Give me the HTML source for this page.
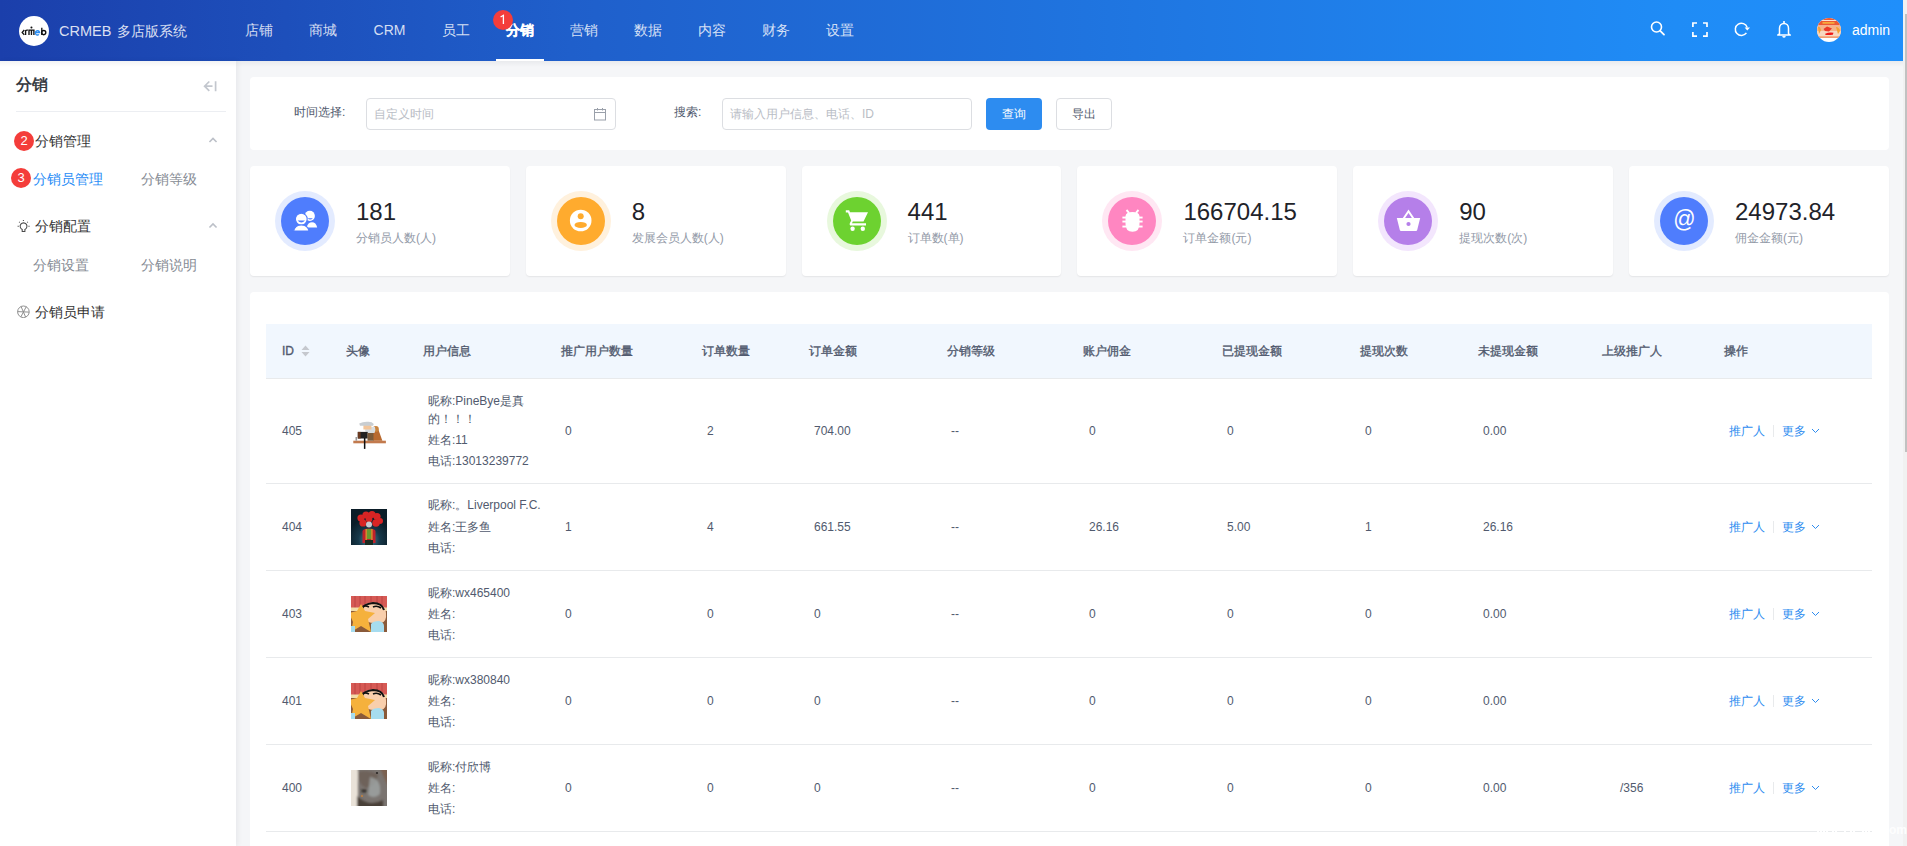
<!DOCTYPE html>
<html><head><meta charset="utf-8">
<style>
*{box-sizing:border-box;margin:0;padding:0}
html,body{width:1907px;height:846px;overflow:hidden}
body{font-family:"Liberation Sans",sans-serif;background:#f5f6f8;position:relative;color:#515a6e}
.abs{position:absolute}
#hdr{left:0;top:0;width:1903px;height:61px;background:linear-gradient(90deg,#1b3fab 0%,#1f5fcb 30%,#1f8cf6 88%,#1f8ffb 100%)}
#logo{left:19px;top:16px;width:30px;height:30px;border-radius:50%;background:#fff}
#logo span{position:absolute;left:3px;top:8px;font-size:9px;font-weight:bold;color:#111;letter-spacing:-0.5px}
#title{left:59px;top:21px;font-size:14.5px;line-height:20px;color:rgba(255,255,255,.85);white-space:nowrap}
.nav{top:0;height:61px;line-height:61px;font-size:14px;color:rgba(255,255,255,.82);white-space:nowrap;text-align:center}
.nav.act{color:#fff;font-weight:bold;-webkit-text-stroke:0.3px #fff}
#uline{left:496px;top:59px;width:48px;height:2px;background:#fff}
.badge{width:20px;height:20px;border-radius:50%;background:#f43d3a;color:#fff;font-size:13px;line-height:20px;text-align:center}
#side{left:0;top:61px;width:236px;height:785px;background:#fff;box-shadow:2px 0 5px rgba(0,21,41,.06)}
#hsh{left:0;top:61px;width:1903px;height:6px;background:linear-gradient(180deg,rgba(0,21,41,.05),rgba(0,21,41,0))}
#sb{left:1903px;top:0;width:4px;height:846px;background:#f1f1f1}
#sbt{left:1905px;top:14px;width:2px;height:438px;background:#c1c1c1}
.card{background:#fff;border-radius:4px}
.t12{font-size:12px;line-height:16px;white-space:nowrap}
.inp{border:1px solid #dcdee2;border-radius:4px;background:#fff}
.ph{color:#b9bdc5}
.stat{top:166px;width:260px;height:110px;box-shadow:0 1px 1.5px rgba(0,0,0,.07)}
.halo{left:25px;top:25px;width:60px;height:60px;border-radius:50%}
.core{left:6px;top:6px;width:48px;height:48px;border-radius:50%}
.num{left:106px;top:32px;font-size:24px;line-height:28px;color:#1f2329;white-space:nowrap}
.lbl{left:106px;top:64px;font-size:12px;line-height:16px;color:#939aa8;white-space:nowrap}
.th{top:324px;height:54px;line-height:54px;font-size:12px;font-weight:normal;-webkit-text-stroke:0.35px #515a6e;color:#515a6e;white-space:nowrap}
.td{font-size:12px;color:#515a6e;white-space:nowrap}
.rl{left:266px;width:1606px;height:1px;background:#e8eaec}
.link{color:#2d8cf0}
.av1{background:radial-gradient(circle at 50% 55%,#7a5a3a 0,#a87b4f 20%,#fff 55%)}
.av2{background:radial-gradient(circle at 50% 30%,#c8202a 0,#a01822 25%,#15303c 55%,#0c1c26 100%)}
.av3{background:linear-gradient(180deg,#c23a3a 0,#c23a3a 25%,#f0c8a0 25%,#f3b63c 70%,#7cc0e8 100%)}
.av4{background:radial-gradient(circle at 50% 50%,#6a6560 0,#8a8580 40%,#c0bcb5 100%)}
</style></head><body>
<div id="hdr" class="abs"></div>
<div id="logo" class="abs"><svg width="30" height="30" viewBox="0 0 30 30" style="position:absolute;left:0;top:0"><g fill="none" stroke="#111" stroke-width="1.35"><path d="M5.3 14 L3.2 16.4 L5.3 18.9"/><path d="M6.6 19 V14.6 Q7.2 13.9 8.9 14.1"/><path d="M10 19 V14.1 H14.9 V19 M12.45 14.1 V19"/><path d="M22.8 11.8 V19"/><circle cx="24.7" cy="16.6" r="2.1"/></g><circle cx="12.45" cy="11.6" r="1" fill="#111"/><g fill="none" stroke="#2a8cf0" stroke-width="1.35"><path d="M16.4 16.5 H20.5 A2.1 2.2 0 1 0 19.9 18.4"/></g></svg></div>
<div id="title" class="abs">CRMEB<span style="font-size:14px;margin-left:6px">多店版系统</span></div>
<div class="abs nav" style="left:235px;width:48px">店铺</div>
<div class="abs nav" style="left:299px;width:48px">商城</div>
<div class="abs nav" style="left:363px;width:53px">CRM</div>
<div class="abs nav" style="left:432px;width:48px">员工</div>
<div class="abs nav act" style="left:496px;width:48px">分销</div>
<div class="abs nav" style="left:560px;width:48px">营销</div>
<div class="abs nav" style="left:624px;width:48px">数据</div>
<div class="abs nav" style="left:688px;width:48px">内容</div>
<div class="abs nav" style="left:752px;width:48px">财务</div>
<div class="abs nav" style="left:816px;width:48px">设置</div>
<div id="uline" class="abs"></div>
<div class="abs badge" style="left:493px;top:10px"><svg width="20" height="20" viewBox="0 0 20 20" style="position:absolute;left:0;top:0"><path d="M7.6 7 L10.4 5.3 V14" fill="none" stroke="#fff" stroke-width="1.3"/></svg></div>


<svg class="abs" style="left:1649px;top:20px" width="17" height="17" viewBox="0 0 17 17"><g fill="none" stroke="#fff" stroke-width="1.6"><circle cx="7.5" cy="7" r="5"/><path d="M11.2 10.8 L15 14.6" stroke-linecap="round" stroke-width="1.8"/></g></svg>
<svg class="abs" style="left:1691px;top:21px" width="18" height="17" viewBox="0 0 18 17"><g fill="none" stroke="#fff" stroke-width="1.7"><path d="M1.9 6 V2 H6 M12 2 H16 V6 M16 11 V15.2 H12 M6 15.2 H1.9 V11"/></g></svg>
<svg class="abs" style="left:1733px;top:21px" width="18" height="17" viewBox="0 0 18 17"><g fill="none" stroke="#fff" stroke-width="1.5"><path d="M13.4 11.9 A6.1 6.1 0 1 1 14.2 6.4"/></g><path d="M11.6 6.6 L17 6.6 L14.3 9.6Z" fill="#fff"/></svg>
<svg class="abs" style="left:1776px;top:20px" width="16" height="18" viewBox="0 0 16 18"><g fill="none" stroke="#fff" stroke-width="1.5"><path d="M3.5 13.8 V8.2 A4.5 4.8 0 0 1 12.5 8.2 V13.8 L14.3 15 H1.7Z" stroke-linejoin="round"/><path d="M6.6 16.2 Q8 17.6 9.4 16.2"/></g><circle cx="8" cy="2" r="1.1" fill="#fff"/></svg>
<div class="abs" style="left:1817px;top:18px;width:24px;height:24px;border-radius:50%;overflow:hidden;background:#fff"><svg width="24" height="24" viewBox="0 0 24 24"><rect width="24" height="7.5" fill="#ec5a34"/><rect x="4" y="2" width="15" height="1" fill="#fde0d0"/><rect x="5.5" y="4.2" width="12" height="1.4" fill="#f8c040"/><rect y="7.5" width="24" height="11.5" fill="#f6b48a"/><rect y="13" width="24" height="6" fill="#f7d8c0"/><path d="M1 9 Q3 8 4 12 L2 16Z" fill="#f5a030"/><path d="M19 9 Q22 9 23 13 L21 16Z" fill="#f5a030"/><path d="M6.5 11 L10 8.5 L15 10.5 L12 13.5 L8 13Z" fill="#ea3a2a"/><path d="M8.2 15.8 Q12 14 16.5 14.8 L15.8 16.8 Q12 17.2 8.5 17Z" fill="#f01818"/><rect y="18.5" width="24" height="1.3" fill="#f08850"/></svg></div>
<div class="abs" style="left:1852px;top:20px;font-size:14px;line-height:20px;color:#fff;white-space:nowrap">admin</div>
<div id="side" class="abs"></div>

<div class="abs" style="left:16px;top:73px;font-size:16px;line-height:24px;font-weight:normal;-webkit-text-stroke:0.45px #2b2f36;color:#2b2f36">分销</div>
<svg class="abs" style="left:203px;top:80px" width="16" height="13" viewBox="0 0 16 13"><path d="M6.3 1.5 L1.6 6.2 L6.3 10.9 M1.6 6.2 H9.5 M12.6 1.3 V11.3" fill="none" stroke="#c3c7ce" stroke-width="1.7"/></svg>
<div class="abs" style="left:16px;top:111px;width:210px;height:1px;background:#eceef2"></div>
<div class="abs badge" style="left:14px;top:131px">2</div>
<div class="abs" style="left:35px;top:131px;font-size:14px;line-height:20px;color:#333">分销管理</div>
<svg class="abs" style="left:208px;top:137px" width="11" height="7" viewBox="0 0 11 7"><path d="M1.45 5.05 L5 1.4 L8.55 5.05" fill="none" stroke="#bcc0c8" stroke-width="1.6"/></svg>
<div class="abs badge" style="left:11px;top:168px">3</div>
<div class="abs" style="left:33px;top:169px;font-size:14px;line-height:20px;color:#1f8cf6">分销员管理</div>
<div class="abs" style="left:141px;top:169px;font-size:14px;line-height:20px;color:#868b94">分销等级</div>
<svg class="abs" style="left:17px;top:219px" width="14" height="14" viewBox="0 0 14 14"><g fill="none" stroke="#4a4a4a" stroke-width="1.05"><path d="M5.2 12.5 V10.4 A3.4 3.4 0 1 1 7.9 10.4 V12.5 Z"/><path d="M6.4 0.9 V2.1 M2.1 2.8 L2.8 3.5 M10.9 2.8 L10.2 3.5 M0.6 7.3 H1.8 M11.4 7.3 H12.6"/></g></svg>
<div class="abs" style="left:35px;top:216px;font-size:14px;line-height:20px;color:#333">分销配置</div>
<svg class="abs" style="left:208px;top:222px" width="11" height="7" viewBox="0 0 11 7"><path d="M1.45 5.55 L5 1.9 L8.55 5.55" fill="none" stroke="#bcc0c8" stroke-width="1.6"/></svg>
<div class="abs" style="left:33px;top:255px;font-size:14px;line-height:20px;color:#868b94">分销设置</div>
<div class="abs" style="left:141px;top:255px;font-size:14px;line-height:20px;color:#868b94">分销说明</div>
<svg class="abs" style="left:17px;top:305px" width="13" height="13" viewBox="0 0 13 13"><g fill="none" stroke="#8a8a8a" stroke-width="0.95"><circle cx="6.4" cy="6.8" r="5.8"/><path d="M0.6 6.6 L12.2 7.1 M4.1 1.6 L8.6 12 M9.3 1.6 L3.8 12"/></g></svg>
<div class="abs" style="left:35px;top:302px;font-size:14px;line-height:20px;color:#333">分销员申请</div>

<div class="abs card" style="left:250px;top:77px;width:1639px;height:73px"></div>
<div class="abs t12" style="left:294px;top:104px;color:#515a6e">时间选择:</div>
<div class="abs inp" style="left:366px;top:98px;width:250px;height:32px"></div>
<div class="abs t12 ph" style="left:374px;top:106px">自定义时间</div>
<svg class="abs" style="left:594px;top:108px" width="13" height="13" viewBox="0 0 13 13"><g fill="none" stroke="#9aa0aa" stroke-width="1"><rect x="0.5" y="1.5" width="11" height="10.5"/><path d="M0.5 4.5H11.5 M3.5 0V2.5 M8.5 0V2.5"/></g></svg>
<div class="abs t12" style="left:674px;top:104px;color:#515a6e">搜索:</div>
<div class="abs inp" style="left:722px;top:98px;width:250px;height:32px"></div>
<div class="abs t12 ph" style="left:730px;top:106px">请输入用户信息、电话、ID</div>
<div class="abs" style="left:986px;top:98px;width:56px;height:32px;border-radius:4px;background:#2d8cf0;color:#fff;font-size:12px;line-height:32px;text-align:center">查询</div>
<div class="abs inp" style="left:1056px;top:98px;width:56px;height:32px;color:#515a6e;font-size:12px;line-height:30px;text-align:center">导出</div>
<div class="abs card stat" style="left:250.0px;width:259.8px"><div class="abs halo" style="background:#e3ebff"><div class="abs core" style="background:#4f7dfd"><svg width="48" height="48" viewBox="0 0 48 48"><g fill="#fff"><circle cx="28.8" cy="18.9" r="5.1"/><path d="M25.5 30.4 Q27 25.2 31 25.2 Q35 25.2 36.2 30.4Z"/></g><g fill="#fff" stroke="#4f7dfd" stroke-width="1.1"><circle cx="20.3" cy="22.1" r="5.9"/><path d="M12.6 34 Q13.8 28 20.3 28 Q26.8 28 28 34Z"/></g><g fill="#4f7dfd"><path d="M16.6 23.6 Q20.3 27.4 24 23.6Z"/><path d="M26.6 21.2 Q29.2 23.6 31.9 21.2Z"/></g></svg></div></div><div class="abs num">181</div><div class="abs lbl">分销员人数(人)</div></div>
<div class="abs card stat" style="left:525.8px;width:259.8px"><div class="abs halo" style="background:#fff1dd"><div class="abs core" style="background:#ffab2e"><svg width="48" height="48" viewBox="0 0 48 48"><circle cx="23.7" cy="23.5" r="10.8" fill="#fff"/><circle cx="23.7" cy="19.2" r="3" fill="#ffab2e"/><ellipse cx="23.7" cy="27.9" rx="6.2" ry="3" fill="#ffab2e"/></svg></div></div><div class="abs num">8</div><div class="abs lbl">发展会员人数(人)</div></div>
<div class="abs card stat" style="left:801.6px;width:259.8px"><div class="abs halo" style="background:#e8f8dd"><div class="abs core" style="background:#6dd230"><svg width="48" height="48" viewBox="0 0 48 48"><g fill="#fff"><path d="M12.8 13.3 H16.2 L17 15.2 H35 L30.5 24.6 H19.8 L19 26.2 H33 V28.6 H18.2 Q16.2 28.6 16.8 26.2 L18.2 23.5 L15 15.5 H12.8Z"/><circle cx="19.6" cy="31.8" r="2.2"/><circle cx="29.8" cy="31.8" r="2.2"/></g></svg></div></div><div class="abs num">441</div><div class="abs lbl">订单数(单)</div></div>
<div class="abs card stat" style="left:1077.4px;width:259.8px"><div class="abs halo" style="background:#ffe7f3"><div class="abs core" style="background:#ff86c1"><svg width="48" height="48" viewBox="0 0 48 48"><g fill="#fff"><path d="M17.5 19 Q18 15 24.5 15 Q31 15 31.5 19 V27 Q31.5 34.8 24.5 34.8 Q17.5 34.8 17.5 27Z"/><rect x="14.4" y="19.6" width="3.6" height="1.9"/><rect x="14.4" y="23.6" width="3.6" height="1.9"/><rect x="14.4" y="28.6" width="3.6" height="1.9"/><rect x="31" y="19.6" width="3.6" height="1.9"/><rect x="31" y="23.6" width="3.6" height="1.9"/><rect x="31" y="28.6" width="3.6" height="1.9"/></g><path d="M18.5 13 L21 15.8 M30.5 13 L28 15.8" stroke="#fff" stroke-width="1.9"/></svg></div></div><div class="abs num">166704.15</div><div class="abs lbl">订单金额(元)</div></div>
<div class="abs card stat" style="left:1353.2px;width:259.8px"><div class="abs halo" style="background:#f3e6fd"><div class="abs core" style="background:#b57fe9"><svg width="48" height="48" viewBox="0 0 48 48"><path d="M19.6 21.5 L24.5 14.2 L29.4 21.5" fill="none" stroke="#fff" stroke-width="2"/><path d="M12.8 21 H36.2 L33.2 33 Q32.9 33.9 32 33.9 H17 Q16.1 33.9 15.8 33 Z" fill="#fff"/><circle cx="24.5" cy="27" r="2.1" fill="#b57fe9"/></svg></div></div><div class="abs num">90</div><div class="abs lbl">提现次数(次)</div></div>
<div class="abs card stat" style="left:1629.0px;width:259.8px"><div class="abs halo" style="background:#e3ebff"><div class="abs core" style="background:#4f7dfd"><svg width="48" height="48" viewBox="0 0 48 48"><text x="24.5" y="31.5" text-anchor="middle" font-family="Liberation Sans" font-size="22" fill="#fff" transform="matrix(1,0,0,1.1,0,-4.5)">@</text></svg></div></div><div class="abs num">24973.84</div><div class="abs lbl">佣金金额(元)</div></div>
<div class="abs card" style="left:250px;top:292px;width:1639px;height:560px"></div>
<div class="abs" style="left:266px;top:324px;width:1606px;height:54px;background:#f1f7fe"></div>
<div class="abs rl" style="top:378px"></div>
<div class="abs th" style="left:282px">ID</div>
<div class="abs th" style="left:346px">头像</div>
<div class="abs th" style="left:423px">用户信息</div>
<div class="abs th" style="left:561px">推广用户数量</div>
<div class="abs th" style="left:702px">订单数量</div>
<div class="abs th" style="left:809px">订单金额</div>
<div class="abs th" style="left:947px">分销等级</div>
<div class="abs th" style="left:1083px">账户佣金</div>
<div class="abs th" style="left:1222px">已提现金额</div>
<div class="abs th" style="left:1360px">提现次数</div>
<div class="abs th" style="left:1478px">未提现金额</div>
<div class="abs th" style="left:1602px">上级推广人</div>
<div class="abs th" style="left:1724px">操作</div>
<svg class="abs" style="left:301px;top:345px" width="9" height="12" viewBox="0 0 9 12"><path d="M4.5 0.5 L8.5 5 H0.5Z M4.5 11.5 L8.5 7 H0.5Z" fill="#c5c8ce"/></svg>
<div class="abs td" style="left:282px;top:421px;line-height:20px">405</div>
<div class="abs" style="left:351px;top:413px;width:36px;height:36px"><svg width="36" height="36" viewBox="0 0 36 36"><rect x="2.3" y="27.7" width="32.6" height="2.6" fill="#c27a4e"/><path d="M20.5 14.7 Q24 13.5 27 15.5 L31.4 27.7 H22 Z" fill="#b86a30"/><circle cx="24.8" cy="16" r="3" fill="#c9843e"/><path d="M14 17 Q15 14 18 14 H24 Q25 17 23.5 20 H15Z" fill="#d8dde0"/><rect x="12.4" y="11.3" width="8" height="5.2" fill="#f2c59a"/><path d="M8.2 10.5 Q12 8.4 17 8.7 Q21 8.5 22.8 11 L22 12.8 H9Z" fill="#c9ced2"/><rect x="6.8" y="18.9" width="9.9" height="6.6" fill="#222"/><rect x="6.8" y="18.9" width="2.8" height="6.6" fill="#6a3a20"/><rect x="16.5" y="20" width="6" height="7.7" fill="#7a5a3a"/><rect x="12.9" y="25" width="1.5" height="10.9" fill="#111"/><rect x="4.5" y="24" width="1.6" height="3.7" fill="#999"/></svg></div>
<div class="abs td" style="left:428px;top:390.5px;line-height:20px">昵称:PineBye是真</div>
<div class="abs td" style="left:428px;top:409.3px;line-height:20px">的！！！</div>
<div class="abs td" style="left:428px;top:430.0px;line-height:20px">姓名:11</div>
<div class="abs td" style="left:428px;top:450.5px;line-height:20px">电话:13013239772</div>
<div class="abs td" style="left:565px;top:421px;line-height:20px">0</div>
<div class="abs td" style="left:707px;top:421px;line-height:20px">2</div>
<div class="abs td" style="left:814px;top:421px;line-height:20px">704.00</div>
<div class="abs td" style="left:951px;top:421px;line-height:20px">--</div>
<div class="abs td" style="left:1089px;top:421px;line-height:20px">0</div>
<div class="abs td" style="left:1227px;top:421px;line-height:20px">0</div>
<div class="abs td" style="left:1365px;top:421px;line-height:20px">0</div>
<div class="abs td" style="left:1483px;top:421px;line-height:20px">0.00</div>
<div class="abs td link" style="left:1729px;top:421px;line-height:20px">推广人</div>
<div class="abs" style="left:1773px;top:425px;width:1px;height:12px;background:#e8eaec"></div>
<div class="abs td link" style="left:1782px;top:421px;line-height:20px">更多</div>
<svg class="abs" style="left:1811px;top:428px" width="9" height="6" viewBox="0 0 9 6"><path d="M1 1 L4.5 4.5 L8 1" fill="none" stroke="#2d8cf0" stroke-width="1"/></svg>
<div class="abs rl" style="top:483px"></div>
<div class="abs td" style="left:282px;top:517px;line-height:20px">404</div>
<div class="abs" style="left:351px;top:509px;width:36px;height:36px"><svg width="36" height="36" viewBox="0 0 36 36"><defs><radialGradient id="g2" cx="50%" cy="85%" r="60%"><stop offset="0" stop-color="#4a8a9a"/><stop offset="0.5" stop-color="#16384a"/><stop offset="1" stop-color="#0b1d28"/></radialGradient></defs><rect width="36" height="36" fill="url(#g2)"/><g fill="#d82424"><circle cx="10" cy="9" r="3.6"/><circle cx="15" cy="6" r="3.6"/><circle cx="21" cy="5.5" r="3.6"/><circle cx="26" cy="7.5" r="3.6"/><circle cx="12" cy="14" r="3.6"/><circle cx="18" cy="10" r="3.4"/><circle cx="25" cy="14" r="3.8"/><circle cx="29" cy="12" r="3"/></g><circle cx="18" cy="15.5" r="3" fill="#c8c8d0"/><path d="M11.5 34 V22 Q12 19.5 18 19.5 Q24 19.5 24.5 22 V34Z" fill="#c0202a"/><rect x="15.5" y="20" width="5" height="10" fill="#6a9a30"/><rect x="14.5" y="20" width="1.4" height="12" fill="#d89030"/><rect x="20.2" y="20" width="1.4" height="12" fill="#d89030"/><rect x="14" y="31" width="8" height="5" fill="#1a2a20"/></svg></div>
<div class="abs td" style="left:428px;top:495.3px;line-height:20px">昵称:。Liverpool F.C.</div>
<div class="abs td" style="left:428px;top:516.6px;line-height:20px">姓名:王多鱼</div>
<div class="abs td" style="left:428px;top:537.5px;line-height:20px">电话:</div>
<div class="abs td" style="left:565px;top:517px;line-height:20px">1</div>
<div class="abs td" style="left:707px;top:517px;line-height:20px">4</div>
<div class="abs td" style="left:814px;top:517px;line-height:20px">661.55</div>
<div class="abs td" style="left:951px;top:517px;line-height:20px">--</div>
<div class="abs td" style="left:1089px;top:517px;line-height:20px">26.16</div>
<div class="abs td" style="left:1227px;top:517px;line-height:20px">5.00</div>
<div class="abs td" style="left:1365px;top:517px;line-height:20px">1</div>
<div class="abs td" style="left:1483px;top:517px;line-height:20px">26.16</div>
<div class="abs td link" style="left:1729px;top:517px;line-height:20px">推广人</div>
<div class="abs" style="left:1773px;top:521px;width:1px;height:12px;background:#e8eaec"></div>
<div class="abs td link" style="left:1782px;top:517px;line-height:20px">更多</div>
<svg class="abs" style="left:1811px;top:524px" width="9" height="6" viewBox="0 0 9 6"><path d="M1 1 L4.5 4.5 L8 1" fill="none" stroke="#2d8cf0" stroke-width="1"/></svg>
<div class="abs rl" style="top:570px"></div>
<div class="abs td" style="left:282px;top:604px;line-height:20px">403</div>
<div class="abs" style="left:351px;top:596px;width:36px;height:36px"><svg width="36" height="36" viewBox="0 0 36 36"><rect width="36" height="36" fill="#8a5a3a"/><rect width="36" height="12" fill="#d65a55"/><g stroke="#b84040" stroke-width="0.8"><path d="M4 0V12M9 0V12M14 0V12M20 0V12M26 0V12M31 0V12"/></g><rect y="11.5" width="36" height="3.5" fill="#f2dca8"/><path d="M10 16 Q10 7 22 6.5 Q34 7 35 17 Q36 26 30 27 Q22 28 14 25 Q9 22 10 16Z" fill="#f9cfac"/><path d="M10.5 14 Q12 8 22 7 Q31 7 33 14" fill="none" stroke="#111" stroke-width="2"/><path d="M11 11 Q14 9 18 11 M22 11 Q26 9 30 12" stroke="#111" stroke-width="1.6" fill="none"/><path d="M-2 17 L6 15 L10 8 L14 15 L24 17 L17 23 L20 36 L10 30 L0 36 L2 26Z" fill="#f5b13c"/><path d="M20 36 V28 Q22 25 28 25 Q33 26 33 30 V36Z" fill="#a6dcef"/><rect x="0" y="30" width="4" height="6" fill="#a6dcef"/></svg></div>
<div class="abs td" style="left:428px;top:583px;line-height:20px">昵称:wx465400</div>
<div class="abs td" style="left:428px;top:603.6px;line-height:20px">姓名:</div>
<div class="abs td" style="left:428px;top:624.5px;line-height:20px">电话:</div>
<div class="abs td" style="left:565px;top:604px;line-height:20px">0</div>
<div class="abs td" style="left:707px;top:604px;line-height:20px">0</div>
<div class="abs td" style="left:814px;top:604px;line-height:20px">0</div>
<div class="abs td" style="left:951px;top:604px;line-height:20px">--</div>
<div class="abs td" style="left:1089px;top:604px;line-height:20px">0</div>
<div class="abs td" style="left:1227px;top:604px;line-height:20px">0</div>
<div class="abs td" style="left:1365px;top:604px;line-height:20px">0</div>
<div class="abs td" style="left:1483px;top:604px;line-height:20px">0.00</div>
<div class="abs td link" style="left:1729px;top:604px;line-height:20px">推广人</div>
<div class="abs" style="left:1773px;top:608px;width:1px;height:12px;background:#e8eaec"></div>
<div class="abs td link" style="left:1782px;top:604px;line-height:20px">更多</div>
<svg class="abs" style="left:1811px;top:611px" width="9" height="6" viewBox="0 0 9 6"><path d="M1 1 L4.5 4.5 L8 1" fill="none" stroke="#2d8cf0" stroke-width="1"/></svg>
<div class="abs rl" style="top:657px"></div>
<div class="abs td" style="left:282px;top:691px;line-height:20px">401</div>
<div class="abs" style="left:351px;top:683px;width:36px;height:36px"><svg width="36" height="36" viewBox="0 0 36 36"><rect width="36" height="36" fill="#8a5a3a"/><rect width="36" height="12" fill="#d65a55"/><g stroke="#b84040" stroke-width="0.8"><path d="M4 0V12M9 0V12M14 0V12M20 0V12M26 0V12M31 0V12"/></g><rect y="11.5" width="36" height="3.5" fill="#f2dca8"/><path d="M10 16 Q10 7 22 6.5 Q34 7 35 17 Q36 26 30 27 Q22 28 14 25 Q9 22 10 16Z" fill="#f9cfac"/><path d="M10.5 14 Q12 8 22 7 Q31 7 33 14" fill="none" stroke="#111" stroke-width="2"/><path d="M11 11 Q14 9 18 11 M22 11 Q26 9 30 12" stroke="#111" stroke-width="1.6" fill="none"/><path d="M-2 17 L6 15 L10 8 L14 15 L24 17 L17 23 L20 36 L10 30 L0 36 L2 26Z" fill="#f5b13c"/><path d="M20 36 V28 Q22 25 28 25 Q33 26 33 30 V36Z" fill="#a6dcef"/><rect x="0" y="30" width="4" height="6" fill="#a6dcef"/></svg></div>
<div class="abs td" style="left:428px;top:670px;line-height:20px">昵称:wx380840</div>
<div class="abs td" style="left:428px;top:690.6px;line-height:20px">姓名:</div>
<div class="abs td" style="left:428px;top:711.5px;line-height:20px">电话:</div>
<div class="abs td" style="left:565px;top:691px;line-height:20px">0</div>
<div class="abs td" style="left:707px;top:691px;line-height:20px">0</div>
<div class="abs td" style="left:814px;top:691px;line-height:20px">0</div>
<div class="abs td" style="left:951px;top:691px;line-height:20px">--</div>
<div class="abs td" style="left:1089px;top:691px;line-height:20px">0</div>
<div class="abs td" style="left:1227px;top:691px;line-height:20px">0</div>
<div class="abs td" style="left:1365px;top:691px;line-height:20px">0</div>
<div class="abs td" style="left:1483px;top:691px;line-height:20px">0.00</div>
<div class="abs td link" style="left:1729px;top:691px;line-height:20px">推广人</div>
<div class="abs" style="left:1773px;top:695px;width:1px;height:12px;background:#e8eaec"></div>
<div class="abs td link" style="left:1782px;top:691px;line-height:20px">更多</div>
<svg class="abs" style="left:1811px;top:698px" width="9" height="6" viewBox="0 0 9 6"><path d="M1 1 L4.5 4.5 L8 1" fill="none" stroke="#2d8cf0" stroke-width="1"/></svg>
<div class="abs rl" style="top:744px"></div>
<div class="abs td" style="left:282px;top:778px;line-height:20px">400</div>
<div class="abs" style="left:351px;top:770px;width:36px;height:36px"><svg width="36" height="36" viewBox="0 0 36 36"><filter id="bl4" x="-20%" y="-20%" width="140%" height="140%"><feGaussianBlur stdDeviation="1.3"/></filter><rect width="36" height="36" fill="#7a7470"/><g filter="url(#bl4)"><rect x="-3" y="-3" width="10" height="42" fill="#e9e2d8"/><path d="M7 2 Q17 -1 27 4 Q26 16 15 18 Q6 14 7 2Z" fill="#6e625a"/><path d="M29 -2 H38 V18 Q33 8 29 -2Z" fill="#7a6050"/><path d="M19 7 Q31 9 29 24 Q24 30 17 25Z" fill="#a2a8a8" opacity="0.75"/><path d="M6 26 Q18 38 32 30 V38 H6Z" fill="#4a4038"/><ellipse cx="13" cy="21" rx="3" ry="1.4" fill="#2a2624"/></g><circle cx="11" cy="26" r="1.1" fill="#c08040"/><circle cx="26" cy="3" r="1.1" fill="#2a2624"/></svg></div>
<div class="abs td" style="left:428px;top:757px;line-height:20px">昵称:付欣博</div>
<div class="abs td" style="left:428px;top:777.6px;line-height:20px">姓名:</div>
<div class="abs td" style="left:428px;top:798.5px;line-height:20px">电话:</div>
<div class="abs td" style="left:565px;top:778px;line-height:20px">0</div>
<div class="abs td" style="left:707px;top:778px;line-height:20px">0</div>
<div class="abs td" style="left:814px;top:778px;line-height:20px">0</div>
<div class="abs td" style="left:951px;top:778px;line-height:20px">--</div>
<div class="abs td" style="left:1089px;top:778px;line-height:20px">0</div>
<div class="abs td" style="left:1227px;top:778px;line-height:20px">0</div>
<div class="abs td" style="left:1365px;top:778px;line-height:20px">0</div>
<div class="abs td" style="left:1483px;top:778px;line-height:20px">0.00</div>
<div class="abs td" style="left:1620px;top:778px;line-height:20px">/356</div>
<div class="abs td link" style="left:1729px;top:778px;line-height:20px">推广人</div>
<div class="abs" style="left:1773px;top:782px;width:1px;height:12px;background:#e8eaec"></div>
<div class="abs td link" style="left:1782px;top:778px;line-height:20px">更多</div>
<svg class="abs" style="left:1811px;top:785px" width="9" height="6" viewBox="0 0 9 6"><path d="M1 1 L4.5 4.5 L8 1" fill="none" stroke="#2d8cf0" stroke-width="1"/></svg>
<div class="abs rl" style="top:831px"></div>
<div id="hsh" class="abs"></div>
<div id="sb" class="abs"></div><div id="sbt" class="abs"></div>
<div class="abs" style="left:1889px;top:823px;font-size:12px;line-height:14px;font-weight:bold;color:rgba(255,255,255,.9)">om</div>
<div class="abs" style="left:1817px;top:830px;width:2px;height:3px;background:#fff"></div><div class="abs" style="left:1820px;top:830px;width:2px;height:3px;background:#fff"></div><div class="abs" style="left:1823px;top:830px;width:2px;height:3px;background:#fff"></div><div class="abs" style="left:1826px;top:830px;width:2px;height:3px;background:#fff"></div><div class="abs" style="left:1832px;top:830px;width:2px;height:3px;background:#fff"></div><div class="abs" style="left:1835px;top:830px;width:2px;height:3px;background:#fff"></div><div class="abs" style="left:1844px;top:830px;width:2px;height:3px;background:#fff"></div><div class="abs" style="left:1850px;top:830px;width:2px;height:3px;background:#fff"></div><div class="abs" style="left:1853px;top:830px;width:2px;height:3px;background:#fff"></div><div class="abs" style="left:1862px;top:830px;width:2px;height:3px;background:#fff"></div><div class="abs" style="left:1865px;top:830px;width:2px;height:3px;background:#fff"></div><div class="abs" style="left:1868px;top:830px;width:2px;height:3px;background:#fff"></div>
</body></html>
